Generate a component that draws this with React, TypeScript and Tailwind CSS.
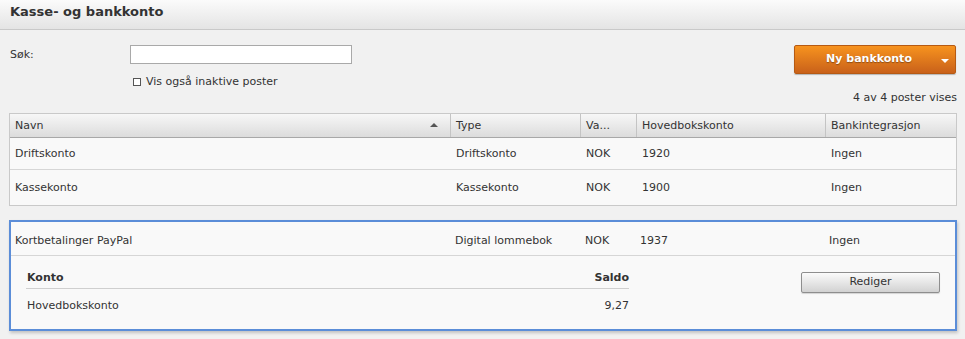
import React from 'react';

const cols = 'grid grid-cols-[441px_130px_56px_189px_132px]';

const rows = [
  { navn: 'Driftskonto', type: 'Driftskonto', valuta: 'NOK', konto: '1920', bank: 'Ingen', h: 'h-[32px] border-b border-[#d6d6d6]' },
  { navn: 'Kassekonto', type: 'Kassekonto', valuta: 'NOK', konto: '1900', bank: 'Ingen', h: 'h-[35px]' },
];

function HeaderCell({ children, last }: { children: React.ReactNode; last?: boolean }) {
  return (
    <div className={`flex items-center px-[5px] pt-[3px] ${last ? '' : 'border-r border-[#c4c4c4]'}`}>
      {children}
    </div>
  );
}

export default function App() {
  return (
    <div className="w-[965px] h-[339px] overflow-hidden bg-[#f1f1f1] text-[11px] text-[#333] font-['DejaVu_Sans',Verdana,sans-serif]">
      {/* Title bar */}
      <div className="h-[30px] flex items-start pt-[2px] px-[10px] border-b border-[#c9c9c9] bg-gradient-to-b from-[#fbfbfb] to-[#e4e4e4]">
        <h1 className="text-[13px] font-bold text-[#333]">Kasse- og bankkonto</h1>
      </div>

      <div className="px-[9px]">
        {/* Search + actions */}
        <div className="flex justify-between pt-[15px]">
          <div>
            <div className="flex items-center h-[19px]">
              <label className="w-[121px] pl-[1px] pt-[2px]">Søk:</label>
              <input className="w-[222px] h-[19px] bg-white border border-[#a9a9a9] outline-none" />
            </div>
            <div className="flex items-center mt-[12px] pl-[124px] h-[12px]">
              <span className="w-[8px] h-[8px] border border-[#555] bg-white" />
              <span className="ml-[5px]">Vis også inaktive poster</span>
            </div>
          </div>
          <div className="flex flex-col items-end">
            <button className="relative w-[162px] h-[29px] pr-[12px] rounded-[2px] border border-[#b65a13] bg-gradient-to-b from-[#f7931e] to-[#c9611a] text-white text-[11px] font-bold shadow-[0_1px_1px_rgba(0,0,0,0.25)]">
              <span className="[text-shadow:0_1px_1px_rgba(0,0,0,0.35)]">Ny bankkonto</span>
              <span className="absolute right-[6px] top-[13px] w-0 h-0 border-l-[4px] border-r-[4px] border-t-[4px] border-l-transparent border-r-transparent border-t-white" />
            </button>
            <div className="mt-[16px] mr-[-1px]">4 av 4 poster vises</div>
          </div>
        </div>

        {/* Table */}
        <div className="mt-[6px] w-[948px] border border-[#c9c9c9] bg-[#f9f9f9]">
          <div className={`${cols} h-[24px] border-b border-[#a8a8a8] bg-gradient-to-b from-[#f7f7f7] to-[#dcdcdc]`}>
            <HeaderCell>
              <span className="flex-1">Navn</span>
              <span className="mr-[7px] -mt-[3px] w-0 h-0 border-l-[4px] border-r-[4px] border-b-[4px] border-l-transparent border-r-transparent border-b-[#555]" />
            </HeaderCell>
            <HeaderCell>Type</HeaderCell>
            <HeaderCell>Va...</HeaderCell>
            <HeaderCell>Hovedbokskonto</HeaderCell>
            <HeaderCell last>Bankintegrasjon</HeaderCell>
          </div>
          {rows.map((r) => (
            <div key={r.navn} className={`${cols} items-center pt-[3px] ${r.h}`}>
              <div className="px-[5px]">{r.navn}</div>
              <div className="px-[5px]">{r.type}</div>
              <div className="px-[5px]">{r.valuta}</div>
              <div className="px-[5px]">{r.konto}</div>
              <div className="px-[5px]">{r.bank}</div>
            </div>
          ))}
        </div>

        {/* Expanded row */}
        <div className="mt-[14px] w-[948px] h-[111px] border-2 border-[#5b8dd8] bg-[#f9f9f9] shadow-[1px_2px_3px_rgba(0,0,0,0.2)]">
          <div className={`${cols} items-center pt-[6px] h-[34px] border-b border-[#d6d6d6]`}>
            <div className="px-[4px]">Kortbetalinger PayPal</div>
            <div className="px-[3px]">Digital lommebok</div>
            <div className="px-[3px]">NOK</div>
            <div className="px-[2px]">1937</div>
            <div className="px-[2px]">Ingen</div>
          </div>
          <div className="flex pl-[15px] pt-[15px]">
            <div className="w-[603px]">
              <div className="flex justify-between h-[18px] items-end pb-[1px] border-b border-[#cfcfcf] font-bold">
                <span className="pl-[1px]">Konto</span>
                <span>Saldo</span>
              </div>
              <div className="flex justify-between h-[30px] items-center pt-[5px]">
                <span className="pl-[1px]">Hovedbokskonto</span>
                <span>9,27</span>
              </div>
            </div>
            <button className="ml-[172px] mt-[1px] w-[139px] h-[21px] rounded-[2px] border border-[#8e8e8e] bg-gradient-to-b from-[#fbfbfb] to-[#d2d2d2] text-[11px] text-[#333] shadow-[0_1px_1px_rgba(0,0,0,0.15)]">
              Rediger
            </button>
          </div>
        </div>
      </div>
    </div>
  );
}
